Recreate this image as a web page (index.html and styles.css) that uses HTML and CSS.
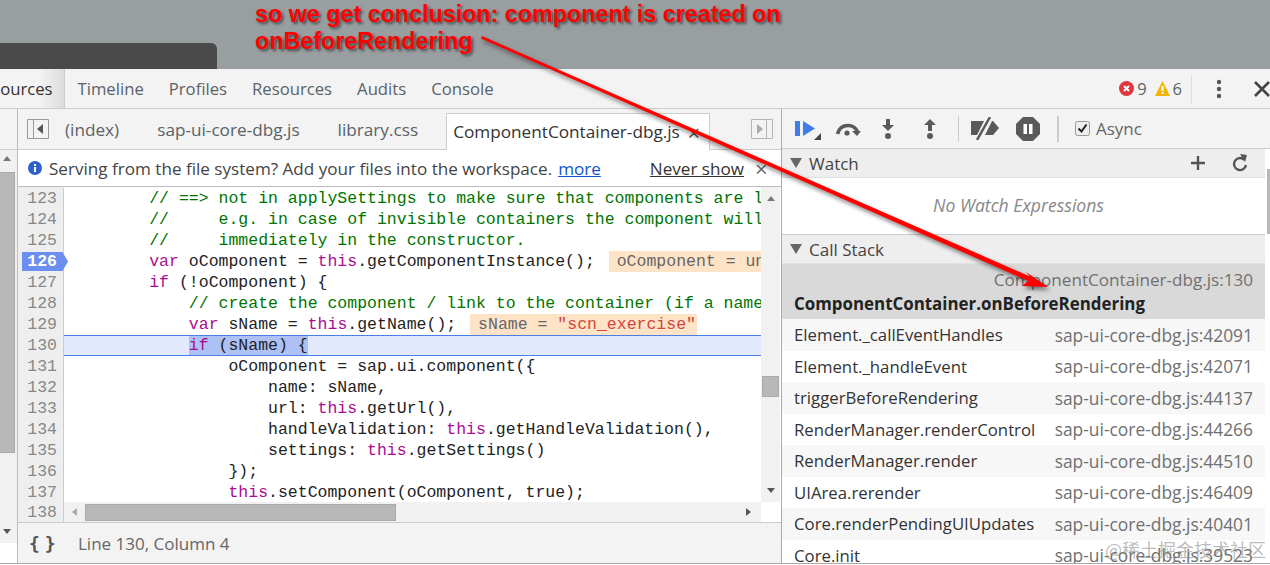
FILE: index.html
```html
<!DOCTYPE html>
<html>
<head>
  <meta charset="utf-8">
  <meta name="viewport" content="width=device-width, initial-scale=1.0">
  <title>DevTools - Sources</title>
  <link rel="stylesheet" href="styles.css">
</head>
<body>
  <div class="desktop-bar"><div class="chrome-tab"></div></div>

  <div class="devtools">
    <nav class="main-toolbar">
      <a class="panel-tab active">Sources</a>
      <a class="panel-tab">Timeline</a>
      <a class="panel-tab">Profiles</a>
      <a class="panel-tab">Resources</a>
      <a class="panel-tab">Audits</a>
      <a class="panel-tab">Console</a>
      <div class="counters">
        <svg class="counter-icon" viewBox="0 0 15 15"><circle cx="7.5" cy="7.5" r="7.5" fill="#e0373c"/><path d="M5 5l5 5M10 5l-5 5" stroke="#fff" stroke-width="2"/></svg>
        <span class="counter-num">9</span>
        <svg class="counter-icon warn" viewBox="0 0 15 15"><path d="M7.5 0L15 15H0z" fill="#f4b400"/><path d="M7.5 5v5M7.5 11v2" stroke="#fff" stroke-width="2"/></svg>
        <span class="counter-num">6</span>
      </div>
      <div class="toolbar-sep"></div>
      <svg class="more-icon" viewBox="0 0 6 20"><circle cx="3" cy="3" r="2.2"/><circle cx="3" cy="10" r="2.2"/><circle cx="3" cy="17" r="2.2"/></svg>
      <svg class="close-icon" viewBox="0 0 16 16"><path d="M1 1l14 14M15 1L1 15" stroke="#444" stroke-width="2.6"/></svg>
    </nav>

    <div class="panes">
      <div class="navigator">
        <div class="nav-head"></div>
        <div class="nav-scroll">
          <div class="arrow-up"></div>
          <div class="nav-thumb"></div>
          <div class="arrow-down"></div>
        </div>
      </div>

      <div class="editor">
        <div class="file-tabs">
          <svg class="pane-icon" viewBox="0 0 22 20"><path d="M.5.5h21v19H.5zM6.5.5v19" fill="#f3f3f3" stroke="#999"/><path d="M16 5v10l-6-5z" fill="#555"/></svg>
          <a class="file-tab">(index)</a>
          <a class="file-tab">sap-ui-core-dbg.js</a>
          <a class="file-tab">library.css</a>
          <a class="file-tab current">ComponentContainer-dbg.js<span class="tab-close">×</span></a>
          <svg class="pane-icon right" viewBox="0 0 22 20"><path d="M.5.5h21v19H.5zM15.5.5v19" fill="#f3f3f3" stroke="#b5b5b5"/><path d="M6 5v10l6-5z" fill="#aaa"/></svg>
        </div>

        <div class="infobar">
          <svg class="info-icon" viewBox="0 0 14 14"><circle cx="7" cy="7" r="7" fill="#2f5fc9"/><path d="M7 6v5M7 3v2" stroke="#fff" stroke-width="2"/></svg>
          <span>Serving from the file system? Add your files into the workspace.</span>
          <a class="info-more">more</a>
          <a class="info-never">Never show</a>
          <span class="info-close">×</span>
        </div>

        <div class="code-area">
          <div class="code-main">
            <div class="code-lines">
              <div class="line"><span class="num">123</span><code class="src c">        // ==&gt; not in applySettings to make sure that components are loaded</code></div>
              <div class="line"><span class="num">124</span><code class="src c">        //     e.g. in case of invisible containers the component will</code></div>
              <div class="line"><span class="num">125</span><code class="src c">        //     immediately in the constructor.</code></div>
              <div class="line"><span class="num bp">126</span><code class="src">        <b>var</b> oComponent = <b>this</b>.getComponentInstance(); <i class="val">oComponent = undefined</i></code></div>
              <div class="line"><span class="num">127</span><code class="src">        <b>if</b> (!oComponent) {</code></div>
              <div class="line"><span class="num">128</span><code class="src c">            // create the component / link to the container (if a name</code></div>
              <div class="line"><span class="num">129</span><code class="src">            <b>var</b> sName = <b>this</b>.getName(); <i class="val">sName = <em>"scn_exercise"</em></i></code></div>
              <div class="line exec"><span class="num">130</span><code class="src">            <span class="exec-mark"><b>if</b> (sName) {</span></code></div>
              <div class="line"><span class="num">131</span><code class="src">                oComponent = sap.ui.component({</code></div>
              <div class="line"><span class="num">132</span><code class="src">                    name: sName,</code></div>
              <div class="line"><span class="num">133</span><code class="src">                    url: <b>this</b>.getUrl(),</code></div>
              <div class="line"><span class="num">134</span><code class="src">                    handleValidation: <b>this</b>.getHandleValidation(),</code></div>
              <div class="line"><span class="num">135</span><code class="src">                    settings: <b>this</b>.getSettings()</code></div>
              <div class="line"><span class="num">136</span><code class="src">                });</code></div>
              <div class="line"><span class="num">137</span><code class="src">                <b>this</b>.setComponent(oComponent, true);</code></div>
            </div>
            <div class="vscroll">
              <div class="arrow-up"></div>
              <div class="vthumb"></div>
              <div class="arrow-down"></div>
            </div>
          </div>
          <div class="hscroll-row">
            <div class="hscroll-gutter">138</div>
            <div class="hscroll">
              <div class="arrow-left"></div>
              <div class="hthumb"></div>
              <div class="arrow-right"></div>
            </div>
          </div>
        </div>

        <div class="statusbar">
          <span class="braces">{ }</span>
          <span>Line 130, Column 4</span>
        </div>
      </div>

      <aside class="sidebar">
        <div class="debug-toolbar">
          <svg class="dbg play" viewBox="0 0 26 20"><path d="M0 1h5v15H0zM8 1l12 7.500L8 16z" fill="#3f7de8"/><path d="M26 13v7h-7z" fill="#444"/></svg>
          <svg class="dbg over" viewBox="0 0 26 16"><path d="M2.500 13C4 7 8 4.500 13 4.500S21 7 22.500 11" fill="none" stroke="#5a5a5a" stroke-width="3.600"/><path d="M17 10h9l-4 5z" fill="#5a5a5a"/><circle cx="12" cy="12" r="2.600" fill="#5a5a5a"/></svg>
          <svg class="dbg into" viewBox="0 0 12 20"><path d="M4 0h4v6h4l-6 6-6-6h4z" fill="#5a5a5a"/><circle cx="6" cy="17" r="3" fill="#5a5a5a"/></svg>
          <svg class="dbg out" viewBox="0 0 12 20"><path d="M6 0l6 6H8v6H4V6H0z" fill="#5a5a5a"/><circle cx="6" cy="17" r="3" fill="#5a5a5a"/></svg>
          <div class="dbg-sep"></div>
          <svg class="dbg deact" viewBox="0 0 28 23"><path d="M0 4h13L6 18H0zM14 18l7-14h1l6 7-6 7z" fill="#5a5a5a"/><path d="M19 0L6 23" stroke="#5a5a5a" stroke-width="2.500"/></svg>
          <svg class="dbg pause" viewBox="0 0 24 24"><path d="M7 0h10l7 7v10l-7 7H7l-7-7V7z" fill="#5a5a5a"/><path d="M7.500 7h3.500v10H7.500zM13 7h3.500v10H13z" fill="#fff"/></svg>
          <div class="dbg-sep second"></div>
          <svg class="async-box" viewBox="0 0 15 15"><rect x=".5" y=".5" width="14" height="14" rx="2" fill="#eee" stroke="#999"/><path d="M3.500 7.500l3 3 5-7" fill="none" stroke="#222" stroke-width="2"/></svg>
          <span class="async-label">Async</span>
        </div>

        <div class="section-head watch-head">
          <span class="tri"></span><span>Watch</span>
          <svg class="head-btn add" viewBox="0 0 16 16"><path d="M8 1v14M1 8h14" stroke="#555" stroke-width="2.400"/></svg>
          <svg class="head-btn refresh" viewBox="0 0 16 18"><path d="M12.500 6A6 6 0 1 0 14 11" fill="none" stroke="#555" stroke-width="2.400"/><path d="M8 0l7 1-2 7z" fill="#555"/></svg>
        </div>
        <div class="watch-body">No Watch Expressions</div>

        <div class="section-head">
          <span class="tri"></span><span>Call Stack</span>
        </div>
        <div class="stack">
          <div class="frame selected">
            <div class="frame-loc">ComponentContainer-dbg.js:130</div>
            <div class="frame-name">ComponentContainer.onBeforeRendering</div>
          </div>
          <div class="frame odd"><span>Element._callEventHandles</span><span class="frame-loc">sap-ui-core-dbg.js:42091</span></div>
          <div class="frame"><span>Element._handleEvent</span><span class="frame-loc">sap-ui-core-dbg.js:42071</span></div>
          <div class="frame odd"><span>triggerBeforeRendering</span><span class="frame-loc">sap-ui-core-dbg.js:44137</span></div>
          <div class="frame"><span>RenderManager.renderControl</span><span class="frame-loc">sap-ui-core-dbg.js:44266</span></div>
          <div class="frame odd"><span>RenderManager.render</span><span class="frame-loc">sap-ui-core-dbg.js:44510</span></div>
          <div class="frame"><span>UIArea.rerender</span><span class="frame-loc">sap-ui-core-dbg.js:46409</span></div>
          <div class="frame odd"><span>Core.renderPendingUIUpdates</span><span class="frame-loc">sap-ui-core-dbg.js:40401</span></div>
          <div class="frame"><span>Core.init</span><span class="frame-loc">sap-ui-core-dbg.js:39523</span></div>
        </div>
        <div class="side-thumb"></div>
      </aside>
    </div>
  </div>

  <!-- annotation drawn on top of the screenshot -->
  <div class="note">so we get conclusion: component is created on<br>onBeforeRendering</div>
  <svg class="note-arrow" viewBox="0 0 1270 565"><path d="M482 36L1030 276.500 1026 272 1048 287 1022 286 1028 281 481 38.500z" fill="#f00"/></svg>
  <div class="watermark">@稀土掘金技术社区</div>
</body>
</html>
```

FILE: styles.css
```css
* { box-sizing: border-box; }
html, body { margin: 0; padding: 0; }
body { width: 1270px; height: 565px; overflow: hidden; position: relative; background: #fff; font-family: "Open Sans", Arial, sans-serif; font-size: 17px; color: #333; }

/* grey strip above devtools */
.desktop-bar { height: 69px; background: #999ea1; display: flex; align-items: flex-end; }
.chrome-tab { width: 217px; height: 26px; background: #4a4a4a; border-top-right-radius: 6px; }

.devtools { height: 495px; border-bottom: 1px solid #a8a8a8; display: flex; flex-direction: column; }

/* main toolbar */
.main-toolbar { height: 40px; flex: none; background: #f3f3f3; border-bottom: 1px solid #ccc; display: flex; align-items: center; }
.panel-tab { padding: 0 12.5px; color: #5a6268; white-space: nowrap; line-height: 39px; font-size: 16.7px; }
.panel-tab.active { margin-left: -20px; width: 85px; height: 39px; padding: 0 0 0 11px; color: #333; background: linear-gradient(to right, #f3f3f3 70%, #dcdcdc); border-right: 1px solid #ccc; }
.counters { margin-left: auto; display: flex; align-items: center; }
.counter-icon { width: 15px; height: 15px; }
.counter-icon.warn { margin-left: 8px; }
.counter-num { margin-left: 3px; color: #5a6268; font-size: 16.5px; }
.toolbar-sep { width: 1px; height: 28px; background: #ddd; margin-left: 9px; }
.more-icon { width: 6px; height: 20px; margin-left: 24px; fill: #555; }
.close-icon { width: 16px; height: 16px; margin-left: 32px; flex: none; }

.panes { flex: 1; display: flex; min-height: 0; }

/* navigator strip on the left */
.navigator { width: 18px; flex: none; border-right: 1px solid #bbb; display: flex; flex-direction: column; background: #fff; }
.nav-head { height: 41px; background: #f3f3f3; border-bottom: 1px solid #ccc; }
.nav-scroll { height: 393px; background: #f1f1f1; display: flex; flex-direction: column; align-items: flex-start; padding: 6px 0 9px 0; }
.nav-scroll .arrow-up, .nav-scroll .arrow-down { margin-left: 3px; flex: none; }
.nav-scroll .arrow-down { margin-top: auto; }
.nav-thumb { width: 15px; height: 281px; margin-top: 11px; background: #b8b8b8; border: 1px solid #aaa; border-left: 0; }

.arrow-up { width: 0; height: 0; border: 4px solid transparent; border-top: 0; border-bottom: 5px solid #777; }
.arrow-down { width: 0; height: 0; border: 4px solid transparent; border-bottom: 0; border-top: 5px solid #555; }
.arrow-left { width: 0; height: 0; border: 4px solid transparent; border-left: 0; border-right: 5px solid #aaa; }
.arrow-right { width: 0; height: 0; border: 4px solid transparent; border-right: 0; border-left: 5px solid #555; }

/* editor */
.editor { width: 764px; flex: none; border-right: 1px solid #aaa; display: flex; flex-direction: column; }
.file-tabs { height: 41px; flex: none; background: #f3f3f3; border-bottom: 1px solid #ccc; display: flex; align-items: flex-end; }
.pane-icon { width: 22px; height: 20px; margin: 0 0 10px 9px; flex: none; }
.pane-icon.right { margin-left: auto; margin-right: 8px; }
.file-tab { padding: 0 19px; line-height: 36px; height: 37px; color: #5a6268; white-space: nowrap; font-size: 17.2px; }
.file-tab:first-of-type { margin-left: -3px; }
.file-tab.current { padding: 0 6px; margin-left: 9px; width: 264px; background: #fff; border: 1px solid #ccc; border-bottom: 0; color: #333; display: flex; justify-content: space-between; line-height: 36px; margin-bottom: -1px; height: 37px; }
.tab-close { font-size: 22px; color: #555; margin-right: 3px; }

.infobar { height: 37px; flex: none; background: #fff; border-bottom: 1px solid #bbb; display: flex; align-items: center; padding: 0 0 0 10px; white-space: nowrap; font-size: 17.1px; color: #444; overflow: hidden; }
.info-icon { width: 14px; height: 14px; margin-right: 7px; flex: none; }
.info-more { color: #1155cc; text-decoration: underline; margin-left: 6px; }
.info-never { color: #333; text-decoration: underline; margin-left: 49px; }
.info-close { margin-left: 11px; font-size: 22px; color: #666; }

.code-area { height: 336px; flex: none; display: flex; flex-direction: column; border-bottom: 1px solid #ccc; }
.code-main { height: 315px; display: flex; overflow: hidden; }
.code-lines { width: 743px; overflow: hidden; padding-top: 1px; background: linear-gradient(to right, #eee 46px, #fff 46px); font-family: "Liberation Mono", monospace; font-size: 16.5px; }
.line { height: 21px; display: flex; line-height: 21px; }
.num { width: 46px; flex: none; background: #eee; border-right: 1px solid #ccc; color: #888; text-align: right; padding-right: 6px; position: relative; }
.num.bp { color: #fff; font-weight: bold; z-index: 1; }
.num.bp::before { content: ""; position: absolute; left: 4px; top: 1px; width: 46px; height: 19px; background: #6b8ff0; clip-path: polygon(0 0, 88% 0, 100% 50%, 88% 100%, 0 100%); z-index: -1; }
.src { font-family: inherit; white-space: pre; padding-left: 6px; color: #222; }
.src b { font-weight: normal; color: #aa0d91; }
.src.c { color: #007400; }
.val { display: inline-block; height: 21px; margin-left: 4px; padding: 0 1px 0 8px; font-style: normal; background: #ffe3c7; color: #666; }
.val em { font-style: normal; color: #d0453f; }
.line.exec .src { flex: 1; background: #e2e9fd; border-top: 1px solid #4a7fe8; border-bottom: 1px solid #4a7fe8; line-height: 19px; }
.exec-mark { background: #adc1f5; display: inline-block; height: 19px; }

.vscroll { width: 19px; flex: none; background: #f1f1f1; display: flex; flex-direction: column; align-items: center; padding: 9px 0; }
.vscroll .arrow-up, .vscroll .arrow-down { flex: none; }
.vscroll .arrow-down { margin-top: auto; }
.vthumb { width: 17px; height: 21px; background: #b8b8b8; border: 1px solid #aaa; margin-top: 175px; }

.hscroll-row { height: 20px; display: flex; }
.hscroll-gutter { width: 46px; background: #eee; border-right: 1px solid #ccc; color: #888; text-align: right; padding-right: 6px; font-family: "Liberation Mono", monospace; font-size: 16.5px; line-height: 21px; }
.hscroll { width: 697px; background: #f1f1f1; display: flex; align-items: center; padding: 1px 10px 1px 8px; }
.hthumb { width: 311px; height: 17px; margin-left: 8px; background: #b8b8b8; border: 1px solid #aaa; }
.hscroll .arrow-right { margin-left: auto; }

.statusbar { flex: 1; background: #f3f3f3; display: flex; align-items: center; padding-left: 11px; color: #666; font-size: 17px; }
.braces { font-family: "DejaVu Sans Mono", monospace; font-weight: bold; font-size: 18px; color: #555; width: 49px; letter-spacing: -3px; }

/* debugger sidebar */
.sidebar { flex: 1; min-width: 0; background: #fff; overflow: hidden; position: relative; padding-right: 5px; }
.debug-toolbar { height: 40px; margin-right: -5px; background: #f3f3f3; border-bottom: 1px solid #ccc; display: flex; align-items: center; }
.dbg { flex: none; }
.play { width: 26px; height: 20px; margin-left: 13px; margin-top: 2px; }
.over { width: 26px; height: 16px; margin-left: 14px; }
.into { width: 12px; height: 20px; margin-left: 21px; }
.out { width: 12px; height: 20px; margin-left: 30px; }
.dbg-sep { width: 1px; height: 26px; background: #ccc; margin-left: 22px; }
.deact { width: 28px; height: 23px; margin-left: 12px; }
.pause { width: 24px; height: 24px; margin-left: 17px; }
.dbg-sep.second { margin-left: 17px; width: 2px; }
.async-box { width: 15px; height: 15px; margin-left: 16px; }
.async-label { margin-left: 6px; color: #666; font-size: 17px; }

.section-head { height: 29px; background: #eee; border-bottom: 1px solid #e0e0e0; display: flex; align-items: center; padding-left: 8px; font-size: 17px; color: #444; }
.tri { width: 0; height: 0; border: 6px solid transparent; border-bottom: 0; border-top: 10px solid #666; margin-right: 7px; }
.head-btn { flex: none; }
.add { width: 16px; height: 16px; margin-left: auto; }
.refresh { width: 16px; height: 18px; margin-left: 26px; margin-right: 17px; }
.watch-body { height: 57px; background: #fff; border-bottom: 1px solid #ccc; display: flex; align-items: center; justify-content: center; font-style: italic; color: #888; font-size: 17.6px; padding: 0 10px 3px 0; }

.frame { height: 31.5px; display: flex; justify-content: space-between; align-items: center; padding: 0 12px; background: #fff; white-space: nowrap; font-size: 16.75px; color: #333; }
.frame.odd { background: #f7f7f7; }
.frame-loc { color: #707070; font-size: 17.4px; }
.frame.selected { height: 55px; display: block; background: #d9d9d9; padding-top: 2px; line-height: 27px; }
.frame.selected .frame-loc { text-align: right; font-size: 17.1px; }
.frame-name { font-weight: bold; font-size: 16.9px; color: #222; margin-top: -3px; }
.side-thumb { position: absolute; right: 0; top: 60px; width: 3px; height: 65px; background: #b8b8b8; }

/* annotation */
.note { position: absolute; left: 255px; top: 1px; color: #f00; font-family: "Liberation Sans", Arial, sans-serif; font-weight: bold; font-size: 23.3px; line-height: 27px; white-space: nowrap; text-shadow: 2px 2px 3px rgba(0, 0, 0, .55); }
.note-arrow { position: absolute; left: 0; top: 0; width: 1270px; height: 565px; filter: drop-shadow(2px 3px 2px rgba(0, 0, 0, .5)); pointer-events: none; }
.watermark { position: absolute; left: 1105px; top: 536px; font-family: "Noto Sans CJK SC", sans-serif; font-size: 18px; color: rgba(130, 130, 130, .55); white-space: nowrap; }
```
